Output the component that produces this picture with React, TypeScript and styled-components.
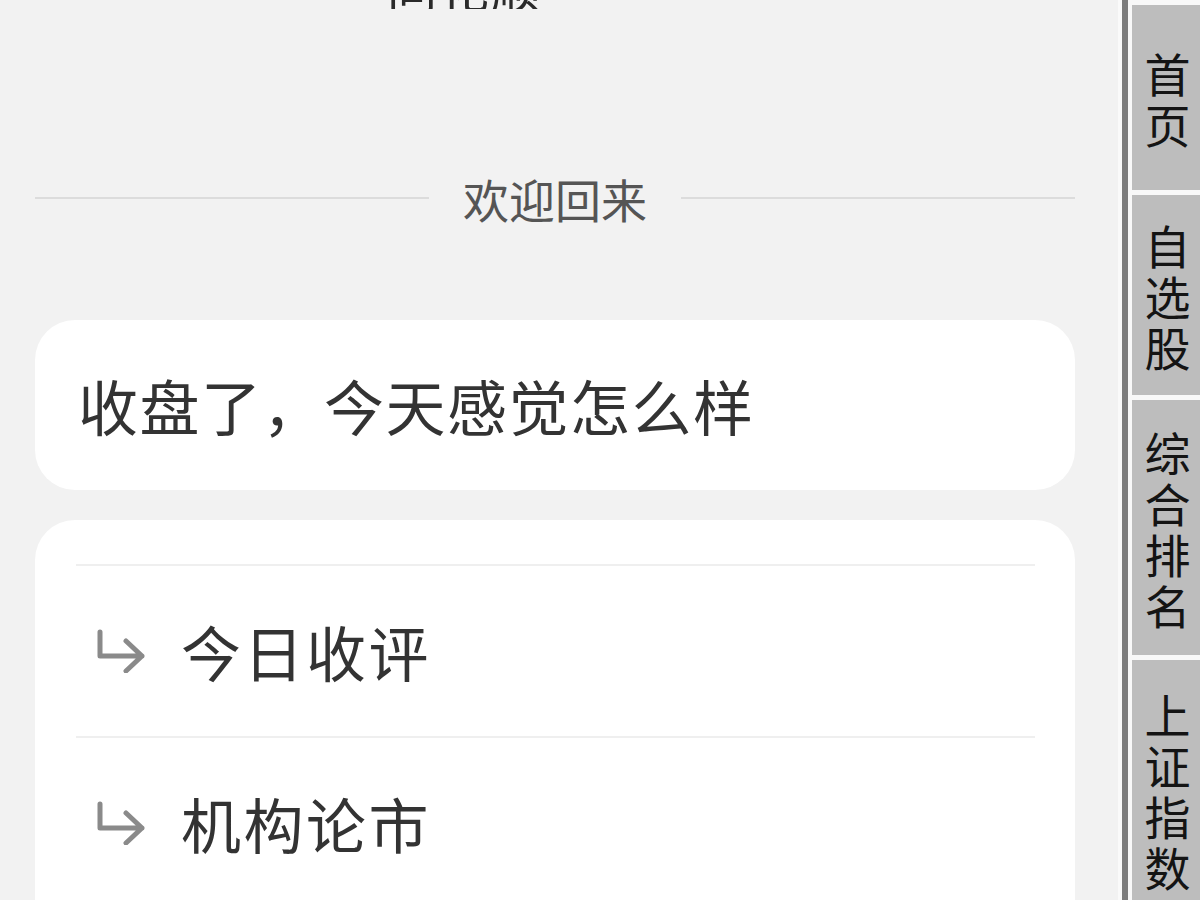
import React from "react";
import styled, { createGlobalStyle } from "styled-components";

const Global = createGlobalStyle`
  html, body {
    margin: 0;
    padding: 0;
    background: #f2f2f2;
  }
  body {
    font-family: "Noto Sans CJK SC", "Noto Sans", sans-serif;
  }
`;

const Shell = styled.div`
  display: flex;
  width: 1200px;
  height: 900px;
  overflow: hidden;
  background: #f2f2f2;
`;

const Main = styled.main`
  flex: 1;
  display: flex;
  flex-direction: column;
  padding: 0 43px 0 35px;
  min-width: 0;
  & > * {
    flex-shrink: 0;
  }
`;

const TitleStrip = styled.div`
  height: 9px;
  overflow: hidden;
  display: flex;
  align-items: flex-end;
  padding-left: 352px;
`;

const TitleText = styled.span`
  font-size: 50px;
  line-height: 50px;
  color: #2a2a2a;
  margin-bottom: -2px;
  letter-spacing: 2px;
`;

const Divider = styled.div`
  display: flex;
  align-items: center;
  gap: 34px;
  margin-top: 166px;
  &::before,
  &::after {
    content: "";
    flex: 1;
    height: 2px;
    background: #dcdcdc;
  }
`;

const DividerLabel = styled.span`
  font-size: 46px;
  line-height: 46px;
  color: #555;
`;

const Card = styled.section<{ $top: number }>`
  background: #fff;
  border-radius: 40px;
  margin-top: ${(p) => p.$top}px;
  box-sizing: border-box;
`;

const PromptCard = styled(Card)`
  height: 170px;
  display: flex;
  align-items: center;
  padding-left: 43px;
`;

const PromptText = styled.span`
  font-size: 60px;
  line-height: 60px;
  letter-spacing: 1.5px;
  color: #333;
`;

const LinkCard = styled(Card)`
  padding: 44px 40px 0 41px;
  min-height: 420px;
  border-bottom-left-radius: 0;
  border-bottom-right-radius: 0;
`;

const LinkRow = styled.div`
  display: flex;
  align-items: center;
  gap: 36px;
  height: 170px;
  padding-left: 19px;
  border-top: 2px solid #efefef;
`;

const LinkText = styled.span`
  font-size: 60px;
  line-height: 60px;
  letter-spacing: 2.5px;
  color: #333;
`;

const Side = styled.aside`
  width: 82px;
  display: flex;
  flex-shrink: 0;
`;

const Edge = styled.div`
  width: 4px;
  background: #fafafa;
`;

const Rail = styled.div`
  width: 6px;
  background: #7d7d7d;
`;

const Tabs = styled.nav`
  flex: 1;
  display: flex;
  flex-direction: column;
  gap: 5px;
  padding: 5px 0 0 4px;
  background: #f8f8f8;
`;

const Tab = styled.div<{ $h: number }>`
  height: ${(p) => p.$h}px;
  flex-shrink: 0;
  background: #bdbdbd;
  display: flex;
  flex-direction: column;
  align-items: center;
  justify-content: center;
  padding-left: 3px;
  font-size: 46px;
  line-height: 51px;
  color: #141414;
`;

const ReplyArrow = () => (
  <svg width="50" height="44" viewBox="0 0 50 44" fill="none">
    <path
      d="M5 3 V27 H47 M31 12 L47 27 L31 42"
      stroke="#8a8a8a"
      strokeWidth="5"
      strokeLinecap="round"
      strokeLinejoin="round"
    />
  </svg>
);

const links = ["今日收评", "机构论市"];

const tabs: { label: string; h: number }[] = [
  { label: "首页", h: 185 },
  { label: "自选股", h: 200 },
  { label: "综合排名", h: 255 },
  { label: "上证指数", h: 260 },
];

export default function App() {
  return (
    <>
      <Global />
      <Shell>
        <Main>
          <TitleStrip>
            <TitleText>同花顺</TitleText>
          </TitleStrip>
          <Divider>
            <DividerLabel>欢迎回来</DividerLabel>
          </Divider>
          <PromptCard $top={99}>
            <PromptText>收盘了，今天感觉怎么样</PromptText>
          </PromptCard>
          <LinkCard $top={30}>
            {links.map((l) => (
              <LinkRow key={l}>
                <ReplyArrow />
                <LinkText>{l}</LinkText>
              </LinkRow>
            ))}
          </LinkCard>
        </Main>
        <Side>
          <Edge />
          <Rail />
          <Tabs>
            {tabs.map((t) => (
              <Tab key={t.label} $h={t.h}>
                {t.label.split("").map((c, i) => (
                  <span key={i}>{c}</span>
                ))}
              </Tab>
            ))}
          </Tabs>
        </Side>
      </Shell>
    </>
  );
}
